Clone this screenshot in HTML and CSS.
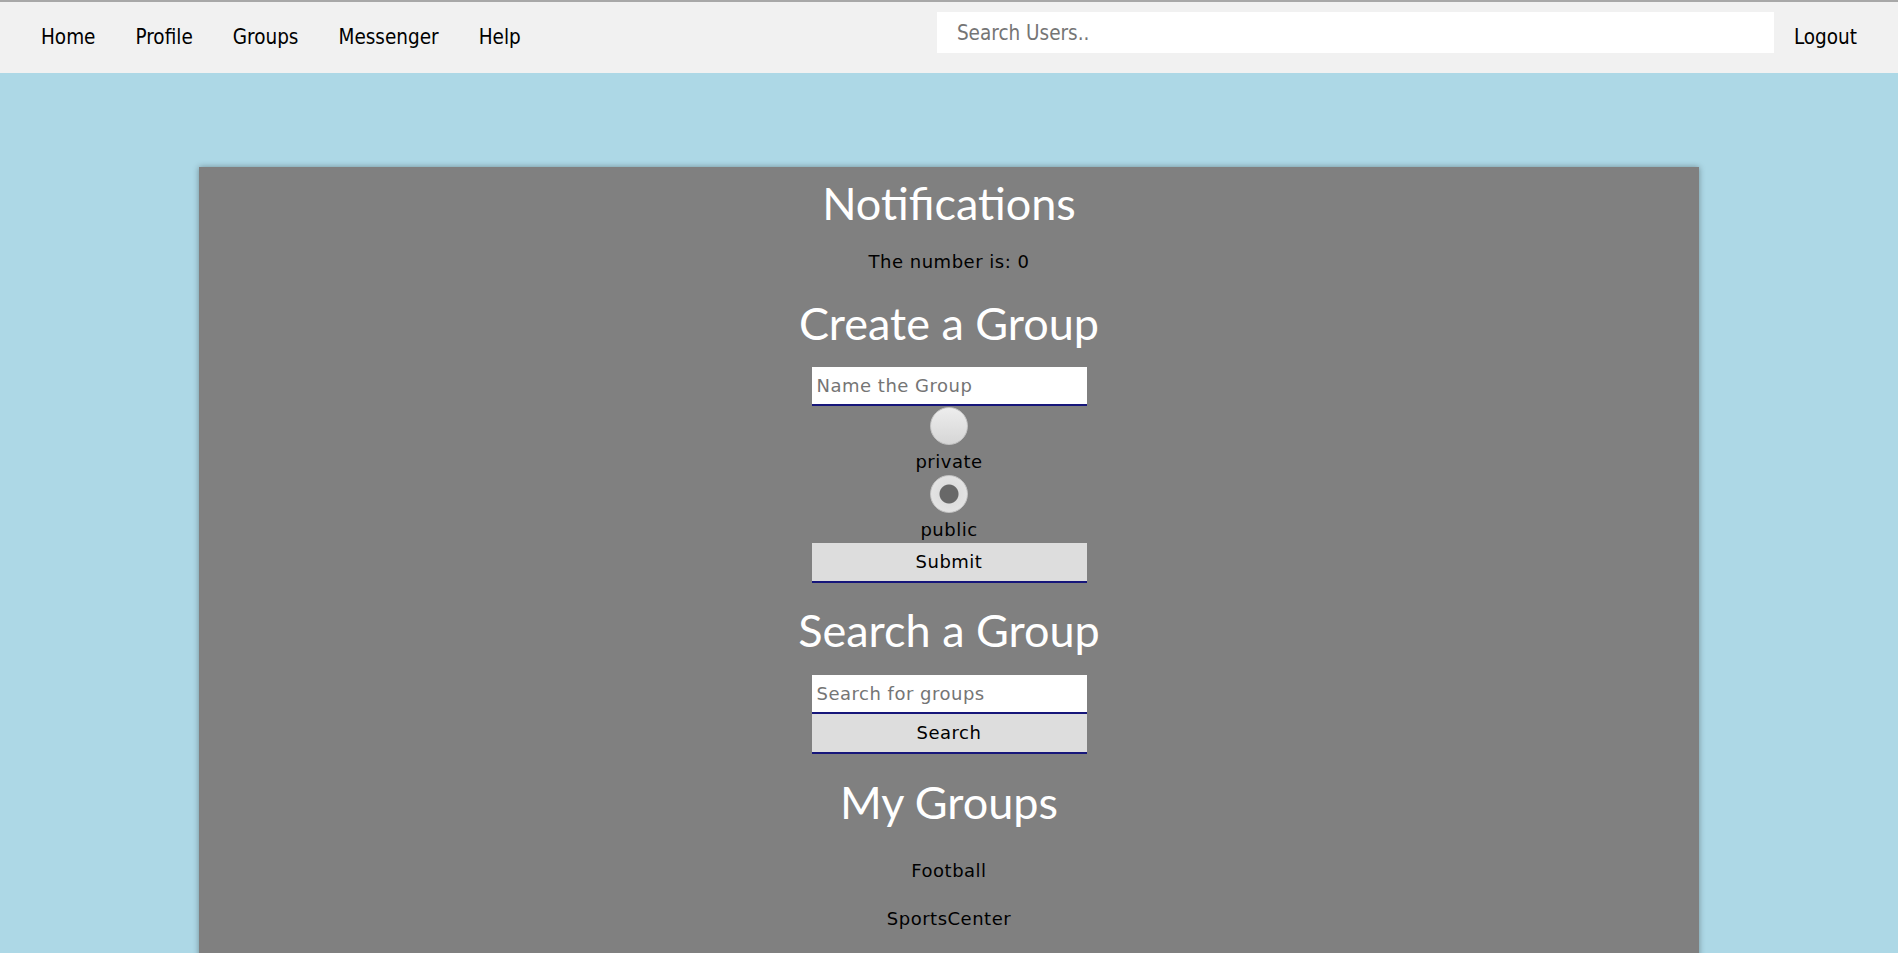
FILE: index.html
```
<!DOCTYPE html>
<html lang="en">
<head>
<meta charset="utf-8">
<title>Groups</title>
<link rel="stylesheet" href="styles.css">
</head>
<body>
<nav class="topnav">
  <a class="nav-link" href="#">Home</a>
  <a class="nav-link" href="#">Profile</a>
  <a class="nav-link" href="#">Groups</a>
  <a class="nav-link" href="#">Messenger</a>
  <a class="nav-link" href="#">Help</a>
  <input class="user-search" type="text" placeholder="Search Users..">
  <a class="nav-link" href="#">Logout</a>
</nav>
<main class="panel">
  <h1 class="heading h-notif">Notifications</h1>
  <p class="text number">The number is: 0</p>
  <h1 class="heading h-create">Create a Group</h1>
  <form class="group-form">
    <input class="field field-name" type="text" placeholder="Name the Group">
    <input class="radio radio-private" type="radio" name="type" value="private">
    <label class="text radio-label">private</label>
    <input class="radio radio-public" type="radio" name="type" value="public" checked>
    <label class="text radio-label">public</label>
    <button class="btn" type="button">Submit</button>
  </form>
  <h1 class="heading h-search">Search a Group</h1>
  <form class="group-form">
    <input class="field field-search" type="text" placeholder="Search for groups">
    <button class="btn" type="button">Search</button>
  </form>
  <h1 class="heading h-mine">My Groups</h1>
  <ul class="group-list">
    <li class="text group-item">Football</li>
    <li class="text group-item">SportsCenter</li>
  </ul>
</main>
</body>
</html>
```
FILE: styles.css
```
html, body {
  margin: 0;
  padding: 0;
}
body {
  background: #add8e6;
  font-family: "DejaVu Sans", Verdana, sans-serif;
  color: #000;
  min-height: 953px;
}
.topnav {
  display: flex;
  align-items: center;
  height: 71px;
  padding: 0 21px 0 21px;
  background: #f1f1f1;
  border-top: 2px solid #a8a8a8;
}
.nav-link {
  padding: 0 20px;
  font-family: "DejaVu Sans Condensed", "DejaVu Sans", sans-serif;
  font-stretch: condensed;
  font-size: 20.5px;
  line-height: 25px;
  color: #000;
  text-decoration: none;
}
.user-search {
  margin-left: auto;
  align-self: flex-start;
  margin-top: 10px;
  width: 837px;
  height: 41px;
  box-sizing: border-box;
  padding: 0 20px;
  border: none;
  outline: none;
  background: #fff;
  font-family: "DejaVu Sans Condensed", "DejaVu Sans", sans-serif;
  font-stretch: condensed;
  font-size: 20.5px;
}
.user-search::placeholder {
  color: #757575;
}
.panel {
  width: 1500px;
  margin: 94px auto 0;
  min-height: 900px;
  background: #808080;
  box-shadow: 0 0 6px rgba(0, 0, 0, 0.35);
  display: flex;
  flex-direction: column;
  align-items: center;
  text-align: center;
  padding-bottom: 40px;
}
.heading {
  margin: 0;
  font-family: Lato, "Open Sans", sans-serif;
  font-weight: 400;
  font-size: 45px;
  line-height: 56px;
  color: #fff;
}
.text {
  margin: 0;
  font-size: 18px;
  letter-spacing: 0.5px;
  line-height: 21px;
}
.h-notif { margin-top: 8px; }
.number { margin-top: 20px; }
.h-create { margin-top: 23px; }
.h-search { margin-top: 19px; }
.h-mine { margin-top: 20px; }
.group-form {
  display: flex;
  flex-direction: column;
  align-items: center;
}
.h-create + .group-form { margin-top: 15.5px; }
.h-search + .group-form { margin-top: 17px; }
.field {
  width: 275px;
  height: 39px;
  box-sizing: border-box;
  padding: 0 5px;
  border: none;
  border-bottom: 2px solid #16167a;
  outline: none;
  background: #fff;
  font-family: "DejaVu Sans", Verdana, sans-serif;
  font-size: 18px;
  letter-spacing: 0.5px;
}
.field::placeholder {
  color: #757575;
}
.radio {
  appearance: none;
  -webkit-appearance: none;
  width: 38px;
  height: 38px;
  margin: 1px 0 0;
  border-radius: 50%;
  box-sizing: border-box;
  border: 1px solid #c4c4c4;
  background: linear-gradient(#ededed, #d6d6d6);
}
.radio:checked {
  background: radial-gradient(circle, #686868 0 9px, #dedede 10px, #e8e8e8 100%);
}
.radio-public { margin-top: 3px; }
.radio-label {
  display: block;
  margin-top: 6px;
}
.radio-label + .btn { margin-top: 3px; }
.btn {
  width: 275px;
  height: 40px;
  box-sizing: border-box;
  margin-top: 0;
  padding: 0;
  border: none;
  border-bottom: 2px solid #16167a;
  background: #dddddd;
  font-family: "DejaVu Sans", Verdana, sans-serif;
  font-size: 18px;
  letter-spacing: 0.5px;
  color: #000;
}
.group-list {
  list-style: none;
  margin: 30px 0 0;
  padding: 0;
}
.group-item {
  margin-bottom: 27px;
}
```
